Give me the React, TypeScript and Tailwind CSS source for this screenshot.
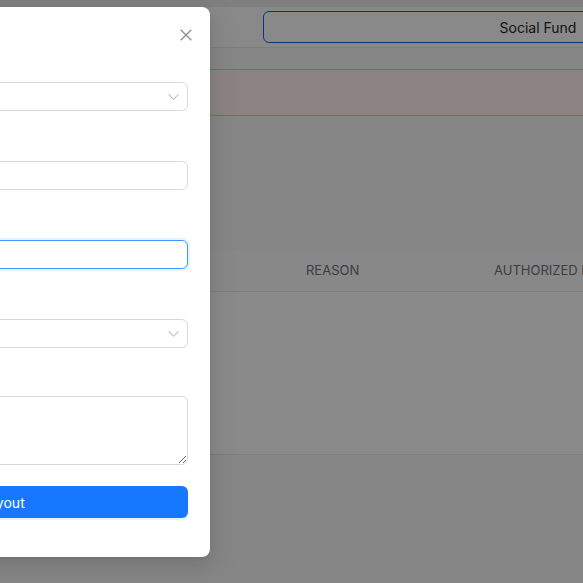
import React from "react";

const fieldShape =
  "block w-full h-[29px] rounded-md border bg-white px-[11px] text-sm text-[#1f1f1f] outline-none";
const fieldBase = `${fieldShape} border-[#d9d9d9]`;
const fieldFocused = `${fieldShape} border-[#4096ff] shadow-[0_0_0_2px_rgba(5,145,255,0.1)]`;

const Chevron = () => (
  <svg
    className="absolute right-[9px] top-1/2 -translate-y-1/2"
    width="11"
    height="7"
    viewBox="0 0 11 7"
    fill="none"
  >
    <path d="M0.6 0.8 L5.5 5.8 L10.4 0.8" stroke="#bfbfbf" strokeWidth="1.1" />
  </svg>
);

const FormLabel = ({ children }: { children: React.ReactNode }) => (
  <label className="block h-[22px] mb-[8px] text-sm leading-[22px] text-[#1f1f1f]">
    {children}
  </label>
);

const PayoutModal = () => {
  return (
    <div className="absolute left-[-206px] top-[7px] w-[416px] h-[550px] rounded-lg bg-white px-[22px] pt-[20px] shadow-[0_6px_16px_0_rgba(0,0,0,0.08),0_3px_6px_-4px_rgba(0,0,0,0.12),0_9px_28px_8px_rgba(0,0,0,0.05)]">
      <button className="absolute top-[17px] right-[13px] flex h-[22px] w-[22px] items-center justify-center">
        <svg width="12" height="12" viewBox="0 0 12 12" fill="none">
          <path d="M0.7 0.7 L11.3 11.3 M11.3 0.7 L0.7 11.3" stroke="#8c8c8c" strokeWidth="1.3" />
        </svg>
      </button>
      <h3 className="h-[22px] text-base font-semibold leading-[22px] text-[#1f1f1f]">
        Request Payout
      </h3>

      <div className="mt-[3px]">
        <FormLabel>Fund</FormLabel>
        <div className="relative">
          <div className={fieldBase}></div>
          <Chevron />
        </div>
      </div>

      <div className="mt-[20px]">
        <FormLabel>Amount</FormLabel>
        <input className={fieldBase} />
      </div>

      <div className="mt-[20px]">
        <FormLabel>Recipient</FormLabel>
        <input className={fieldFocused} />
      </div>

      <div className="mt-[20px]">
        <FormLabel>Payment Method</FormLabel>
        <div className="relative">
          <div className={fieldBase}></div>
          <Chevron />
        </div>
      </div>

      <div className="mt-[18px]">
        <FormLabel>Notes</FormLabel>
        <textarea className="block h-[69px] w-full resize-y rounded-md border border-[#d9d9d9] bg-white px-[11px] py-1 text-sm outline-none" />
      </div>

      <button className="mt-[21px] flex h-[32px] w-full items-center justify-center rounded-md bg-[#1677ff] pt-[2px] text-sm text-white shadow-[0_2px_0_rgba(5,145,255,0.1)]">
        Payout
      </button>
    </div>
  );
};

export default function App() {
  return (
    <div className="relative h-[583px] w-full overflow-hidden bg-[#e7e7e7] font-['Inter',sans-serif]">
      {/* page behind the mask */}
      <div className="pt-[7px]">
        <header className="flex h-[41px] items-center border-b border-[#e5e5e5] bg-[#fafafa] pl-[263px]">
          <button className="flex h-[32px] w-[550px] shrink-0 items-center justify-center rounded-md border-[1.5px] border-[#1d5fe6] text-[14px] text-[#262626]">
            Social Fund
          </button>
        </header>
        <div className="bg-[#f4f4f4] pt-[21px]">
          <div className="h-[47px] border-y border-[#ffb3ad] bg-[#fdeeee]"></div>
          <div className="mt-[134px] bg-[#fbfbfb]">
            <div className="flex h-[42px] items-center border-b border-[#e5e5e5] bg-[#f7f7f7] pl-[102px] text-[13px] text-[#6b7280]">
              <div className="w-[188px] shrink-0 px-4">DATE</div>
              <div className="w-[188px] shrink-0 px-4">REASON</div>
              <div className="w-[188px] shrink-0 px-4 whitespace-nowrap">AUTHORIZED BY</div>
            </div>
            <div className="h-[163px] border-b border-[#e3e3e3]"></div>
          </div>
          <div className="h-[200px]"></div>
        </div>
      </div>

      <div className="absolute inset-0 bg-black/45"></div>
      <PayoutModal />
    </div>
  );
}
